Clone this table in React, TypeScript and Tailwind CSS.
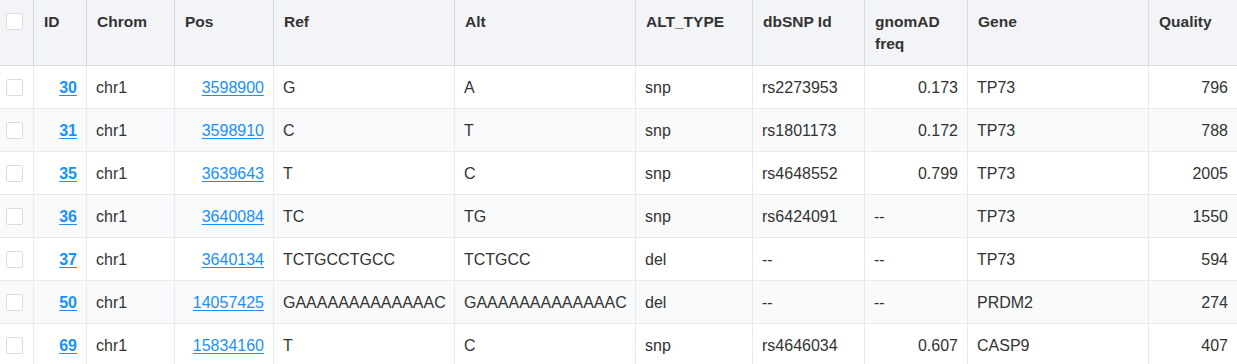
import React from "react";

const cols = "grid grid-cols-[34px_53px_88px_99px_181px_181px_117px_112px_103px_181px_1fr]";

type Row = {
  id: string;
  pos: string;
  ref: string;
  alt: string;
  type: string;
  db: string;
  freq: string;
  gene: string;
  q: string;
};

const rows: Row[] = [
  { id: "30", pos: "3598900", ref: "G", alt: "A", type: "snp", db: "rs2273953", freq: "0.173", gene: "TP73", q: "796" },
  { id: "31", pos: "3598910", ref: "C", alt: "T", type: "snp", db: "rs1801173", freq: "0.172", gene: "TP73", q: "788" },
  { id: "35", pos: "3639643", ref: "T", alt: "C", type: "snp", db: "rs4648552", freq: "0.799", gene: "TP73", q: "2005" },
  { id: "36", pos: "3640084", ref: "TC", alt: "TG", type: "snp", db: "rs6424091", freq: "--", gene: "TP73", q: "1550" },
  { id: "37", pos: "3640134", ref: "TCTGCCTGCC", alt: "TCTGCC", type: "del", db: "--", freq: "--", gene: "TP73", q: "594" },
  { id: "50", pos: "14057425", ref: "GAAAAAAAAAAAAAC", alt: "GAAAAAAAAAAAAAC", type: "del", db: "--", freq: "--", gene: "PRDM2", q: "274" },
  { id: "69", pos: "15834160", ref: "T", alt: "C", type: "snp", db: "rs4646034", freq: "0.607", gene: "CASP9", q: "407" },
];

const headers = ["ID", "Chrom", "Pos", "Ref", "Alt", "ALT_TYPE", "dbSNP Id", "gnomAD freq", "Gene", "Quality"];

function Box() {
  return <div className="w-[17px] h-[17px] rounded-[2px] border border-[#dcdcdc] bg-white" />;
}

export default function App() {
  const hc = "border-r border-b border-[#d6d9df] px-[10px] pt-[11px] pb-[10px] font-bold text-[15.5px] leading-[22px] text-[#333]";
  const bc = "border-r border-b border-[#e8e9ed] px-[9px] pt-[2px] h-[43px] flex items-center text-[16px] text-[#333]";
  return (
    <div className="w-[1237px] h-[364px] overflow-hidden bg-white" style={{ fontFamily: '"Liberation Sans", Arial, sans-serif' }}>
      <div className={`${cols} bg-[#f3f4f7]`}>
        <div className="border-r border-b border-[#d6d9df] pl-[6px] pt-[13px] h-[66px]">
          <Box />
        </div>
        {headers.map((h, i) => (
          <div key={h} className={`${hc} ${i === headers.length - 1 ? "border-r-0" : ""}`}>
            {h}
          </div>
        ))}
      </div>
      {rows.map((r, i) => (
        <div key={r.id} className={`${cols} ${i % 2 === 1 ? "bg-[#f9fafb]" : "bg-white"}`}>
          <div className="border-r border-b border-[#e8e9ed] pl-[6px] h-[43px] flex items-center">
            <Box />
          </div>
          <div className={`${bc} justify-end`}>
            <a className="font-bold text-[#1890ff] underline underline-offset-2">{r.id}</a>
          </div>
          <div className={bc}>chr1</div>
          <div className={`${bc} justify-end`}>
            <a className="text-[#1890ff] underline underline-offset-2">{r.pos}</a>
          </div>
          <div className={bc}>{r.ref}</div>
          <div className={bc}>{r.alt}</div>
          <div className={bc}>{r.type}</div>
          <div className={bc}>{r.db}</div>
          <div className={`${bc} ${r.freq === "--" ? "" : "justify-end"}`}>{r.freq}</div>
          <div className={bc}>{r.gene}</div>
          <div className={`${bc} justify-end border-r-0`}>{r.q}</div>
        </div>
      ))}
    </div>
  );
}
